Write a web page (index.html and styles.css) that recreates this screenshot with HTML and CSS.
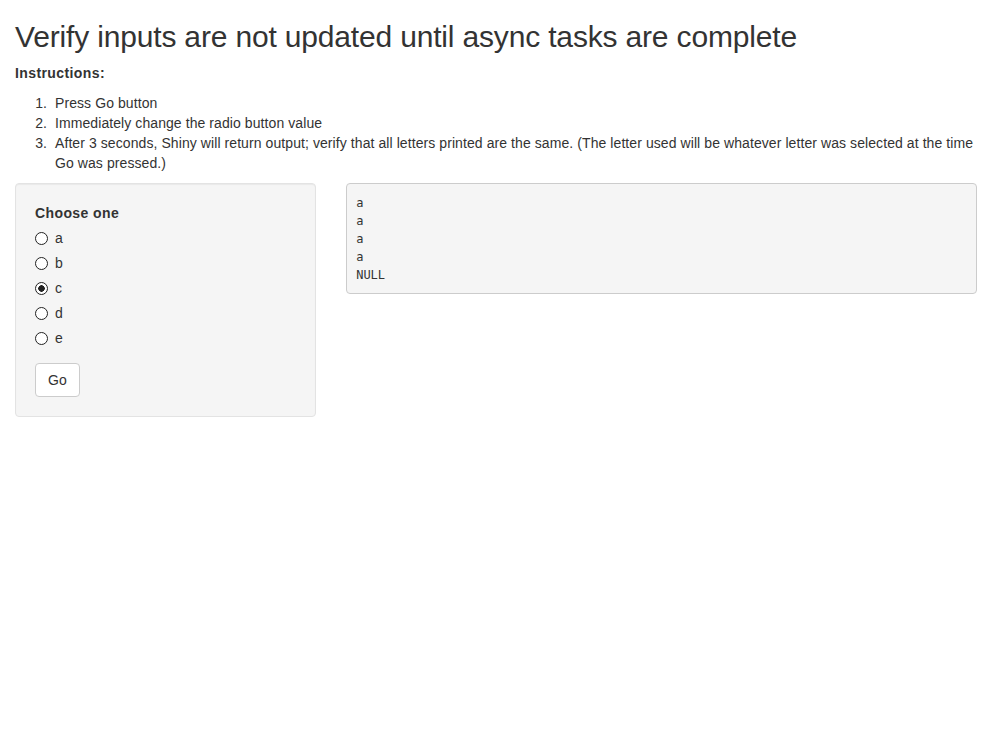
FILE: index.html
```html
<!DOCTYPE html>
<html>
<head>
<meta charset="utf-8">
<title>Async inputs</title>
<link rel="stylesheet" href="styles.css">
</head>
<body>
<div class="container">
  <h2 class="title">Verify inputs are not updated until async tasks are complete</h2>
  <p><strong>Instructions:</strong></p>
  <ol class="steps">
    <li>Press Go button</li>
    <li>Immediately change the radio button value</li>
    <li>After 3 seconds, Shiny will return output; verify that all letters printed are the same. (The letter used will be whatever letter was selected at the time Go was pressed.)</li>
  </ol>
  <div class="row">
    <div class="col-side">
      <form class="well">
        <div class="form-group">
          <label class="control-label">Choose one</label>
          <div class="options-group">
            <div class="radio"><label><input type="radio" name="letter" value="a"><span>a</span></label></div>
            <div class="radio"><label><input type="radio" name="letter" value="b"><span>b</span></label></div>
            <div class="radio"><label><input type="radio" name="letter" value="c" checked><span>c</span></label></div>
            <div class="radio"><label><input type="radio" name="letter" value="d"><span>d</span></label></div>
            <div class="radio"><label><input type="radio" name="letter" value="e"><span>e</span></label></div>
          </div>
        </div>
        <button type="button" class="btn">Go</button>
      </form>
    </div>
    <div class="col-main">
      <pre class="output">a
a
a
a
NULL</pre>
    </div>
  </div>
</div>
</body>
</html>
```

FILE: styles.css
```css
* {
  box-sizing: border-box;
}
html, body {
  margin: 0;
  padding: 0;
  background: #fff;
}
body {
  font-family: "Liberation Sans", Arial, Helvetica, sans-serif;
  font-size: 14px;
  line-height: 20px;
  color: #333;
  letter-spacing: 0.08px;
}
strong, .control-label {
  letter-spacing: 0.4px;
}
.container {
  padding: 0 15px;
}
.title {
  font-size: 30px;
  font-weight: 500;
  line-height: 33px;
  margin: 20px 0 10px;
  letter-spacing: -0.17px;
}
p {
  margin: 0 0 10px;
}
.steps {
  margin: 0 0 10px;
  padding-left: 40px;
}
.steps li::marker {
  content: counter(list-item) ".\00a0\00a0";
}
.row {
  display: flex;
  margin: 0 -15px;
}
.col-side {
  width: 33.3333%;
  padding: 0 15px;
}
.col-main {
  width: 66.6667%;
  padding: 0 15px;
}
.well {
  margin: 0 0 20px;
  padding: 19px;
  background: #f5f5f5;
  border: 1px solid #e3e3e3;
  border-radius: 4px;
  box-shadow: inset 0 1px 1px rgba(0, 0, 0, 0.05);
}
.form-group {
  margin-bottom: 15px;
}
.control-label {
  display: inline-block;
  font-weight: bold;
  margin-bottom: 5px;
}
.options-group {
  margin-top: -10px;
}
.radio {
  position: relative;
  display: block;
  margin: 10px 0;
}
.radio + .radio {
  margin-top: -5px;
}
.radio label {
  display: block;
  min-height: 20px;
  padding-left: 20px;
  font-weight: normal;
  cursor: pointer;
}
.radio input {
  appearance: none;
  -webkit-appearance: none;
  position: absolute;
  margin: 4px 0 0 -20px;
  width: 13px;
  height: 13px;
  border: 1px solid #222;
  border-radius: 50%;
  background: #fff;
}
.radio input:checked {
  background: radial-gradient(circle, #222 0, #222 3px, #fff 3.5px);
}
.btn {
  display: inline-block;
  font-family: inherit;
  font-size: 14px;
  line-height: 20px;
  padding: 6px 12px;
  color: #333;
  background: #fff;
  border: 1px solid #ccc;
  border-radius: 4px;
  cursor: pointer;
  letter-spacing: 0.2px;
}
.output {
  display: block;
  margin: 0 0 10px;
  padding: 9.5px;
  font-family: "DejaVu Sans Mono", "Liberation Mono", monospace;
  font-size: 12px;
  line-height: 18px;
  letter-spacing: 0;
  color: #333;
  background: #f5f5f5;
  border: 1px solid #ccc;
  border-radius: 4px;
  white-space: pre-wrap;
  word-break: break-all;
}
```
